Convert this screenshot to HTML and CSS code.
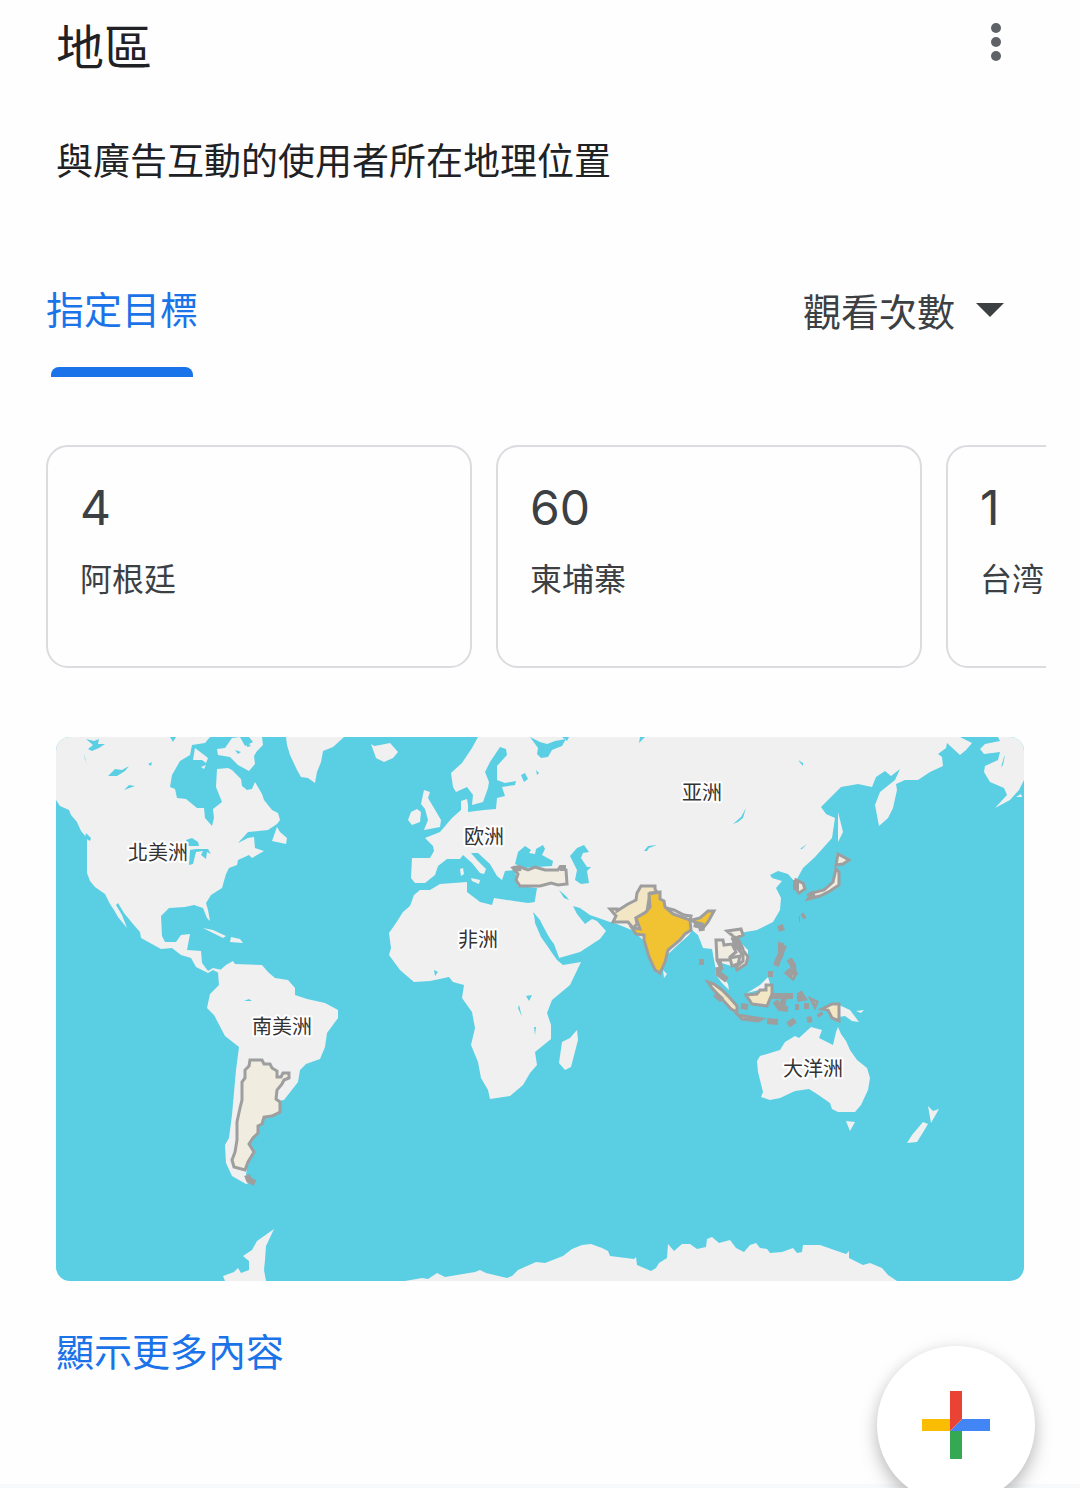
FILE: index.html
```
<!DOCTYPE html>
<html lang="zh-Hant">
  <head>
    <meta charset="UTF-8" />
    <meta name="viewport" content="width=device-width, initial-scale=1" />
    <title>地區</title>
    <link rel="stylesheet" href="styles.css" />
  </head>

  <body>
    <main class="panel">
      <header class="panel-header">
        <h1 class="title">地區</h1>
        <button class="more" type="button" aria-label="更多選項">
          <svg viewBox="0 0 12 40" width="12" height="40">
            <circle cx="6" cy="6" r="5" />
            <circle cx="6" cy="20" r="5" />
            <circle cx="6" cy="34" r="5" />
          </svg>
        </button>
      </header>
      <p class="subtitle">與廣告互動的使用者所在地理位置</p>

      <div class="toolbar">
        <button class="tab" type="button">指定目標</button>
        <div class="metric">
          <select class="metric-select" aria-label="指標">
            <option>觀看次數</option>
          </select>
          <svg class="arrow" viewBox="0 0 28 14" width="28" height="14"><path d="M0 0H28L14 14Z" /></svg>
        </div>
      </div>

      <div class="cards">
        <div class="card">
          <div class="num">4</div>
          <div class="place">阿根廷</div>
        </div>
        <div class="card">
          <div class="num">60</div>
          <div class="place">柬埔寨</div>
        </div>
        <div class="card">
          <div class="num">1</div>
          <div class="place">台湾</div>
        </div>
      </div>

      <svg class="map" viewBox="56 737 968 544" role="img" aria-label="地圖">
        <rect class="sea" x="56" y="737" width="968" height="544" />
        <g class="land">
          <!-- north america -->
          <path d="M56 737V800L60 806 69 810 71 815 77 822 81 831 87 838V873L90 881 95 887 105 894 110 904 114 910 118 917 127 928 122 915 116 905 118 903 124 913 133 924 140 932 141 938 161 949 172 948 181 955 191 958 196 967 208 973 213 970 219 973 222 970 213 968 208 971 202 963 201 951 187 950 190 934 181 935 176 942 165 942 162 936 161 916 169 908 185 907 194 905 203 908 207 918 210 921 208 910 206 903 211 895 222 888 226 874 229 868 237 865 238 860 249 855 252 858 264 851 255 848 254 837 248 838 238 843 248 832 268 830 277 824 280 820 278 813 272 810 264 800 262 794 255 782 252 789 247 790 242 786 241 779 232 770 228 768 217 769 216 787 222 802 213 809 214 818 212 826 205 818 204 808 197 808 186 799 177 798 175 789 170 787 172 775 180 761 190 755 192 745 205 743 210 737Z" />
          <path d="M195 748L208 758 206 763 202 760 193 760ZM217 749L225 748 232 738 240 737 245 746 253 742 249 737H262L263 745 257 751 254 756 255 764 249 771 238 765 230 757 218 755ZM201 767L206 765 204 769Z" />
          <path d="M277 827L280 832 287 838 286 844 272 841ZM203 928L213 930 226 936 223 938 211 932ZM231 937L240 939 243 943 230 942Z" />
          <path d="M286 737L287 745 290 755 297 770 301 777 308 778 315 783 317 772 321 762 323 751 333 747 344 737Z" />
          <path d="M371 744L374 746 380 745 390 743 398 752 393 758 384 762 376 758Z" />
          <!-- south america -->
          <path d="M218 972L226 965 233 961 235 964 262 965 268 972 275 978 288 980 295 988V995L307 999 325 1003 338 1010V1018L327 1033 325 1047 320 1059 306 1064 300 1070 298 1082 284 1100 278 1101 278 1112 262 1117 250 1145 246 1175 252 1182 246 1184 232 1176 226 1163 225 1145 229 1138 232 1115 236 1070 239 1047 225 1036 214 1015 207 1008 210 994 219 985Z" />
          <!-- europe and asia -->
          <path d="M478 737L472 748 462 763 451 773 453 787 456 792 467 787 473 795 472 805 483 802 488 788 489 782 485 772 490 762 500 747 506 749 507 755 497 766V780L505 783 516 781 515 785 502 787 505 796 497 798 496 809 484 810 468 812 468 805 467 799 461 801V810L452 818 440 832 425 838 433 846 434 851 430 858 412 858 411 878 415 883 425 883 435 875 438 866 447 859 460 859 463 855 472 863 480 873 484 874 486 869 477 860 471 853H478L490 864 497 876 502 880 505 871 515 870 518 886 537 888 535 900 533 912 545 930 555 948 559 958 580 952 600 939 606 931 597 921 592 919 585 924 577 914 573 906 580 908 590 915 610 922 617 924 634 931 643 940 650 960 657 973 663 968 667 955 680 943 689 935 692 930 698 935 703 948 712 949 715 965 716 975 722 983 729 990 728 984 720 972 718 962 735 967 748 960V950L738 940 740 933 757 930 773 922 780 910 781 898 776 888 782 881 772 878 770 875 778 871 788 874 795 882 797 879 803 868 815 857 832 838 835 818 826 814 821 807 841 787 858 784 872 787 876 777 885 771 891 776 900 769 895 780 880 792 875 805 879 826 888 818 893 808 897 790 896 784 905 780 918 780 930 772 943 766 942 757 938 754 946 748 947 743 960 755 966 750 972 743 960 737Z" />
          <path d="M424 790L430 792 428 798 434 808 441 820 440 827 424 830 428 820 425 809 421 804ZM417 809L421 812 420 822 412 825 408 820 411 812ZM460 869L463 868 464 874 461 876ZM471 878L480 880 479 884 472 881ZM838 812L843 832 838 842ZM837 852L840 862 836 866ZM663 970L667 974 664 978Z" />
          <path d="M998 737L1000 741 985 744 980 749 984 754 1000 752 998 760 985 766 984 772 990 782 1004 788 1007 795 995 808 1010 800 1019 790 1024 780V737ZM1016 797L1021 794 1022 797Z" />
          <!-- africa -->
          <path d="M420 890L414 895 410 906 403 912 396 923 389 933 391 948 389 955 400 970 414 982 430 981 449 977 453 982 464 985 462 998 472 1012 475 1028 471 1045 478 1062 481 1078 488 1090 490 1099 510 1096 523 1085 530 1073 537 1065 535 1052 551 1039V1025L547 1013 552 1000 570 985 581 962 563 965 557 960 550 950 540 930 533 913 540 895 535 902 528 903 514 901 494 898 492 905 480 902 467 892V882L440 884 430 890Z" />
          <path d="M577 1030L578 1040 571 1067 565 1070 559 1063 562 1042 570 1038Z" />
          <!-- oceania -->
          <path d="M757 1061L760 1056 780 1050 785 1042 795 1036 799 1038 811 1027 822 1030 819 1038 833 1045 836 1032 838 1027 841 1034 846 1041 850 1050 857 1060 867 1068 870 1078 868 1090 861 1105 855 1112H838L832 1109 830 1103 817 1094 809 1089 795 1091 780 1098 770 1100 761 1097 763 1092 758 1072ZM846 1121L855 1122 850 1131Z" />
          <path d="M928 1106L933 1111 939 1109 931 1123ZM923 1122L928 1124 922 1134 917 1142 907 1143 912 1135ZM839 1005L850 1010 859 1022 852 1021 845 1016 839 1017ZM856 1011L864 1010 861 1013ZM747 993L760 985 768 977 771 987Z" />
          <!-- antarctica -->
          <path d="M225 1281L223 1276 234 1272 238 1268 241 1273 249 1270 249 1261 243 1256 252 1250 257 1241 274 1229 266 1246 265 1260 264 1270 266 1281Z" />
          <path d="M405 1281L422 1278 428 1279 437 1273 445 1277 475 1272 480 1270 486 1273 507 1278 512 1276 518 1270 536 1262 545 1263 563 1256 572 1249 582 1245 591 1244 602 1248 608 1251 610 1256 634 1259 636 1257 637 1265 644 1268 651 1271 656 1268 659 1263 667 1258 668 1244 674 1251 682 1244 690 1244 697 1249 706 1247 707 1239 712 1237 719 1243 730 1240 736 1248 744 1252 750 1245 756 1243 760 1248 767 1249 770 1253 782 1252 793 1248 797 1253 802 1252 803 1245 820 1245 840 1252 846 1254 849 1251 849 1258 863 1265 870 1263 882 1268 888 1275 897 1281Z" />
        </g>
        <!-- lakes and inland seas -->
        <g class="water">
          <path d="M86 739L94 741 99 739 98 744 105 744 99 748 92 751 88 749 93 745ZM84 753L86 762 89 767 85 760ZM108 776L115 769 122 770 129 766 125 771 117 776ZM124 790L129 785 135 786ZM170 737H176L173 742ZM148 764L152 762 151 766ZM235 750L241 752 238 754ZM246 741L251 746 247 747ZM86 833L91 838 90 841 85 838Z" />
          <path d="M186 840L192 838 198 842 199 846 188 846ZM190 850L196 849H208L211 854 207 852 206 859 201 855 203 851 196 852 193 864 189 865Z" />
          <path d="M515 864L518 852 525 846 531 850 529 853 535 854 536 849 543 845 545 849 542 855 553 861 552 866 537 867 524 868Z" />
          <path d="M570 856L577 848 584 845 589 852 583 853 581 858 587 867 591 867 587 871 589 883 581 884 575 880 577 870Z" />
          <path d="M530 737L538 748 537 754 541 758 548 757 552 750 562 746 566 739 555 741 547 744 540 742ZM521 775L525 773 528 779 524 782ZM536 770L539 773 537 775ZM562 737H569L567 741ZM640 737H645L639 743ZM733 824L741 817 746 808 743 818 738 822ZM644 851L648 846 657 845 649 848 647 851ZM798 760L803 763 803 766ZM800 849L807 844 802 849Z" />
          <path d="M534 913L540 920 548 936 554 944 559 958 554 954 548 947 541 937 535 923ZM559 890L566 896 569 900 564 898ZM434 970L438 972 435 976ZM526 996L532 995 529 1001ZM519 1005L522 1017 518 1008ZM534 1027H536L535 1035ZM244 1001L249 999 252 1001Z" />
          <path d="M1001 767L1004 757 1005 755 1003 765Z" />
        </g>
        <g class="low">
          <path d="M250 1060H262L264 1064H270L272 1068 277 1071V1077H281L283 1073H289V1078L284 1080 282 1084 277 1090 276 1099 280 1102V1112L272 1116 264 1117 262 1124 258 1126 258 1133 253 1138 249 1144 254 1152 248 1162 245 1170 234 1167 232 1160 235 1152 237 1140 237 1122 240 1108 242 1100V1082L245 1078V1070L249 1066Z" />
          <path d="M513 868L520 867 528 870 535 867 545 870 558 870 560 867 566 870 567 884 558 885 551 883 540 886H520L516 880 518 874Z" />
          <path d="M838 854L849 860 843 864 836 865ZM836 869L839 872V885L830 891 820 896 808 899 812 893 824 890 833 882ZM796 880L803 883 805 889 799 893 795 888Z" />
          <path d="M666 908L674 910 684 915 691 916 690 920 675 917Z" />
          <path d="M716 940H723L724 945 732 944 736 952 730 957V960H720L722 970 717 960ZM730 958L740 956 738 964 732 966ZM727 931L741 929 743 935 736 938 743 950 748 957 746 964 737 970 736 967 743 961V955L734 944 733 936ZM780 944L785 947 782 954ZM787 974H796L793 979Z" />
        </g>
        <g class="mid">
          <path d="M610 909H617V911L628 904 636 900 637 893 641 886H655V889L657 892 650 893 648 905 647 912 636 918 637 924 633 928 628 922H613L616 916Z" />
          <path d="M708 982L714 984 722 990 730 998 737 1006V1012L731 1009 722 999 712 988ZM738 1015L750 1017 762 1019 758 1021 742 1019ZM746 995L757 994 760 990 766 990V985H772V994L767 1006 752 1004ZM822 1009L832 1004H839V1021L832 1018 828 1010ZM811 999L817 1002 815 1007Z" />
        </g>
        <path class="high" d="M649 894L660 892V899L664 901 665 907 673 914 690 920 691 930 685 934 680 940 668 950 665 962 660 973 655 970 649 957 644 940V935L636 934 632 928 640 929 636 918 646 912 650 907ZM692 920L700 918 708 911H714L708 922 703 928 702 924 694 922Z" />
        <!-- small islands, only their border shows -->
        <path class="islands" d="M694 924L701 926 702 931M247 1175L249 1180 255 1183M513 869L521 868M560 868H566M736 938L742 950M733 937L740 948M808 897L814 893M796 880V890M802 917L805 915M799 919H800M780 925L782 931M699 962H704M781 943V954L778 960 776 966M789 959L793 965 794 974M787 970L792 976M718 967L719 974 727 980M768 974H773M772 996H793M775 1001L780 1008 788 1009M784 998L782 1008M799 992L803 998 797 999M795 1007H799M804 1006H809M741 1006L748 1007M767 1021L778 1022M788 1025L795 1020M807 1020L812 1019M819 1013L821 1016M715 994L722 1000" />
        <g class="labels">
          <text x="158" y="860">北美洲</text>
          <text x="484" y="844">欧洲</text>
          <text x="702" y="800">亚洲</text>
          <text x="478" y="947">非洲</text>
          <text x="282" y="1034">南美洲</text>
          <text x="813" y="1076">大洋洲</text>
        </g>
      </svg>

      <a class="link" href="#">顯示更多內容</a>
    </main>

    <button class="fab" type="button" aria-label="新增">
      <svg viewBox="0 0 68 68" width="68" height="68">
        <path fill="#fbbc04" d="M0 28H28V40H0Z" />
        <path fill="#34a853" d="M28 40H40V68H28Z" />
        <path fill="#4285f4" d="M28 40L40 28H68V40Z" />
        <path fill="#ea4335" d="M28 0H40V28L28 40Z" />
      </svg>
    </button>
  </body>
</html>
```
FILE: styles.css
```
* {
  box-sizing: border-box;
  margin: 0;
  padding: 0;
}

body {
  background-color: #f8f9fa;
  color: #202124;
  font-family: "Noto Sans CJK TC", sans-serif;
}

button,
select {
  border: none;
  background: none;
  font: inherit;
  cursor: pointer;
}

svg {
  display: block;
}

.panel {
  padding: 14px 56px 106px;
  background-color: #fefefe;
}

.panel-header {
  display: flex;
  justify-content: space-between;
  align-items: center;
}

.title {
  font-size: 48px;
  font-weight: 400;
  line-height: 60px;
}

.more {
  padding: 0 22px 4px;
  fill: #5f6368;
}

.subtitle {
  margin-top: 57px;
  font-size: 37px;
  line-height: 56px;
}

.toolbar {
  display: flex;
  justify-content: space-between;
  align-items: flex-start;
  margin: 93px 20px 0 -10px;
  font-size: 38px;
  line-height: 56px;
}

.tab {
  color: #1a73e8;
}

.tab::after {
  content: "";
  display: block;
  height: 10px;
  margin: 31px 5px 0;
  border-radius: 8px 8px 0 0;
  background-color: #1a73e8;
}

.metric {
  display: flex;
  align-items: center;
  gap: 20px;
}

.metric-select {
  appearance: none;
  height: 60px;
  color: #3c4043;
}

.arrow {
  fill: #3c4043;
  pointer-events: none;
}

.cards {
  display: flex;
  gap: 24px;
  margin: 68px -22px 0 -10px;
  overflow: hidden;
}

.card {
  flex: 0 0 426px;
  padding: 36px 32px 65px;
  border: 2px solid #dadce0;
  border-radius: 22px;
  color: #3c4043;
}

.num {
  font-family: Inter, sans-serif;
  font-size: 48px;
  line-height: 50px;
}

.place {
  margin-top: 20px;
  font-size: 32px;
  line-height: 48px;
}

.map {
  width: 100%;
  margin-top: 69px;
  border-radius: 14px;
}

.sea,
.water {
  fill: #5acfe3;
}

.land {
  fill: #f0f0f0;
}

.low,
.mid,
.high,
.islands {
  stroke: #9e9e9e;
  stroke-width: 3;
}

.low {
  fill: #f0ede0;
}

.mid {
  fill: #f2e6c5;
}

.high {
  fill: #f1c232;
}

.islands {
  fill: none;
  stroke-width: 6;
}

.labels {
  fill: #333;
  stroke: #fff;
  stroke-width: 4;
  stroke-linejoin: round;
  paint-order: stroke;
  font-family: "Noto Sans CJK SC", sans-serif;
  font-size: 20px;
  text-anchor: middle;
}

.link {
  display: inline-block;
  margin-top: 41px;
  color: #1a73e8;
  font-size: 38px;
  line-height: 56px;
  text-decoration: none;
}

.fab {
  display: flex;
  justify-content: center;
  align-items: center;
  position: fixed;
  right: 45px;
  bottom: -16px;
  width: 158px;
  height: 158px;
  border-radius: 50%;
  background-color: #fff;
  box-shadow: 0 8px 18px rgba(0, 0, 0, 0.25), 0 0 20px rgba(0, 0, 0, 0.05);
}
```
